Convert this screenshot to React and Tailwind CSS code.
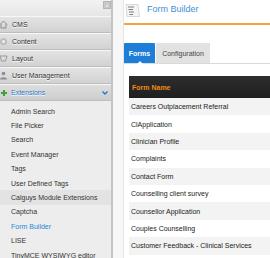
import React from "react";

const menu = [
  { label: "CMS", icon: "home" },
  { label: "Content", icon: "content" },
  { label: "Layout", icon: "layout" },
  { label: "User Management", icon: "users" },
];

const subItems = [
  "Admin Search",
  "File Picker",
  "Search",
  "Event Manager",
  "Tags",
  "User Defined Tags",
  "Calguys Module Extensions",
  "Captcha",
  "Form Builder",
  "LISE",
  "TinyMCE WYSIWYG editor",
];

const forms = [
  "Careers Outplacement Referral",
  "ClApplication",
  "Clinician Profile",
  "Complaints",
  "Contact Form",
  "Counselling client survey",
  "Counsellor Application",
  "Couples Counselling",
  "Customer Feedback - Clinical Services",
];

const MenuIcon = ({ type }) => {
  if (type === "home")
    return (
      <svg width="9" height="9" viewBox="0 0 9 9" fill="none" stroke="#8a8a8a" strokeWidth="1">
        <path d="M1 4.5 L4.5 1 L8 4.5 M2 4 V8 H7 V4" />
      </svg>
    );
  if (type === "content")
    return (
      <svg width="9" height="9" viewBox="0 0 9 9">
        <circle cx="4.5" cy="4.5" r="3.5" fill="#bdbdbd" />
        <circle cx="4.5" cy="4.5" r="1.5" fill="#f0f0f0" />
      </svg>
    );
  if (type === "layout")
    return (
      <svg width="9" height="9" viewBox="0 0 9 9" fill="none" stroke="#9a9a9a" strokeWidth="1">
        <path d="M1 2 H8 L6.5 7 H2.5 Z" />
      </svg>
    );
  return (
    <svg width="9" height="9" viewBox="0 0 9 9" fill="#8d8d8d">
      <circle cx="4.5" cy="2.5" r="1.8" />
      <path d="M1 8.5 C1 5.5 8 5.5 8 8.5 Z" />
    </svg>
  );
};

const Sidebar = () => (
  <aside className="w-[111px] shrink-0 h-full overflow-hidden bg-[#ededed] flex flex-col">
    <div className="h-[16px] shrink-0 flex justify-end pt-[1px] bg-gradient-to-b from-[#f2f2f2] to-[#e6e6e6]">
      <div className="w-[8px] h-[8px] bg-[#c9c9c9] border border-[#b5b5b5] flex items-center justify-center">
        <span className="text-[6px] leading-none text-white font-bold">‹</span>
      </div>
    </div>
    {menu.map((m) => (
      <div
        key={m.label}
        className="h-[17px] shrink-0 flex items-center gap-[3px] pl-[2px] border-t border-t-[#f7f7f7] border-b border-b-[#bdbdbd] bg-gradient-to-b from-[#e3e3e3] to-[#d2d2d2] text-[#333] [text-shadow:0_1px_0_#fff]"
      >
        <span className="-ml-[3px] flex">
          <MenuIcon type={m.icon} />
        </span>
        <span className="ml-[1px]">{m.label}</span>
      </div>
    ))}
    <div className="h-[17px] shrink-0 flex items-center pl-[2px] pr-[3px] border-t border-t-[#f7f7f7] border-b border-b-[#bdbdbd] bg-gradient-to-b from-[#dedede] to-[#cdcdcd] text-[#1e7ad1] [text-shadow:0_1px_0_#fff]">
      <svg width="7" height="8" viewBox="0 0 7 8" className="-ml-[1px]">
        <path d="M0 3 H2 V1 H4 V3 H6 V5 H4 V7 H2 V5 H0 Z" fill="#3aa33a" />
      </svg>
      <span className="ml-[3px] flex-1">Extensions</span>
      <svg width="6" height="4" viewBox="0 0 6 4">
        <path d="M0.5 0.5 L3 3 L5.5 0.5" stroke="#1e7ad1" strokeWidth="1.4" fill="none" />
      </svg>
    </div>
    <div className="pt-[3px] shrink-0 flex flex-col">
      {subItems.map((s) => (
        <div
          key={s}
          className={`h-[14.4px] shrink-0 flex items-center pl-[11px] ${
            s === "Calguys Module Extensions" ? "bg-[#e3e3e3]" : ""
          } ${s === "Form Builder" ? "text-[#2a86d8]" : "text-[#333]"}`}
        >
          {s}
        </div>
      ))}
    </div>
  </aside>
);

const App = () => {
  return (
    <div className="w-[270px] h-[258px] overflow-hidden flex font-['Liberation_Sans',Arial,sans-serif] text-[7px] leading-none bg-white">
      <Sidebar />
      <div className="w-[2px] shrink-0 bg-[#c4c4c4]" />
      <div className="w-[11px] shrink-0 bg-[#f7f7f7] border-r border-r-[#e4e4e4]" />
      <main className="flex-1 min-w-0 h-full overflow-hidden flex flex-col">
        <div className="h-[23px] shrink-0 flex items-start gap-[7px] pl-[1px] pt-[4px]">
          <svg width="15" height="13" viewBox="0 0 15 13">
            <path d="M1 0.5 H13 L14.5 12.5 H2 Z" fill="#f4f4f4" stroke="#cfcfcf" strokeWidth="0.8" />
            <path d="M3 3 H9 M3.5 5.5 H8 M4 8 H9 M4.5 10.5 H8" stroke="#7d7d7d" strokeWidth="1" />
          </svg>
          <span className="text-[9px] text-[#3f8fd6] mt-[1px]">Form Builder</span>
        </div>
        <div className="h-[2px] shrink-0 bg-[#f6a43c]" />
        <div className="h-[18px] shrink-0" />
        <div className="flex shrink-0 items-end">
          <div className="relative w-[31px] h-[20px] bg-[#1c7ed6] text-white font-bold flex items-center justify-center rounded-t-[1px]">
            Forms
            <span className="absolute -bottom-[1px] left-[13px] w-0 h-0 border-l-[3px] border-r-[3px] border-b-[3px] border-l-transparent border-r-transparent border-b-white" />
          </div>
          <div className="ml-[1px] w-[54px] h-[20px] bg-[#e2e2e2] text-[#444] flex items-center justify-center">
            Configuration
          </div>
        </div>
        <div className="flex-1 border-t border-t-[#dadada] pl-[5px] pt-[12px] bg-white">
          <div className="h-[22px] bg-[#262626] bg-gradient-to-b from-[#2e2e2e] to-[#1f1f1f] flex items-center pl-[3px] text-[#f08a12] font-bold">
            Form Name
          </div>
          {forms.map((f, i) => (
            <div
              key={f}
              className={`h-[17.4px] flex items-center pl-[2px] text-[#222] ${
                i % 2 === 0 ? "bg-[#f3f3f3]" : "bg-white"
              }`}
            >
              {f}
            </div>
          ))}
        </div>
      </main>
    </div>
  );
};

export default App;
